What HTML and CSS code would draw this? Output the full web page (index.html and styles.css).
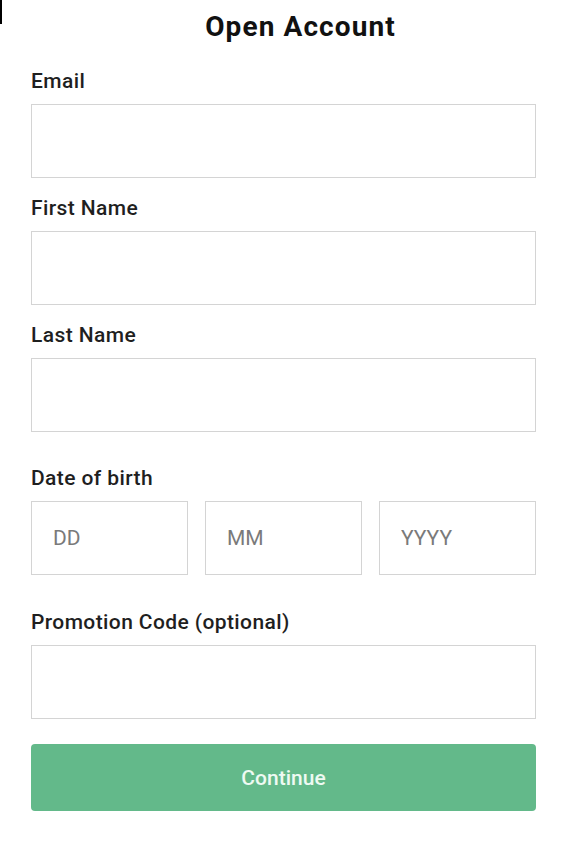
FILE: index.html
```html
<!DOCTYPE html>
<html lang="en">
<head>
<meta charset="utf-8">
<title>Open Account</title>
<link rel="stylesheet" href="styles.css">
</head>
<body>
<span class="cursor"></span>
<main class="page">
  <h1 class="title">Open Account</h1>
  <form class="form">
    <div class="field">
      <label class="label" for="email">Email</label>
      <input class="input" id="email" type="email">
    </div>
    <div class="field">
      <label class="label" for="first">First Name</label>
      <input class="input" id="first" type="text">
    </div>
    <div class="field">
      <label class="label" for="last">Last Name</label>
      <input class="input" id="last" type="text">
    </div>
    <div class="field field-dob">
      <label class="label" for="dd">Date of birth</label>
      <div class="dob">
        <input class="input" id="dd" type="text" placeholder="DD">
        <input class="input" type="text" placeholder="MM">
        <input class="input" type="text" placeholder="YYYY">
      </div>
    </div>
    <div class="field field-promo">
      <label class="label" for="promo">Promotion Code (optional)</label>
      <input class="input" id="promo" type="text">
    </div>
    <button class="button" type="button">Continue</button>
  </form>
</main>
</body>
</html>
```

FILE: styles.css
```css
* { box-sizing: border-box; }
html, body { margin: 0; padding: 0; background: #ffffff; }
body { font-family: Roboto, "Liberation Sans", sans-serif; color: #1c1c1c; }

.cursor {
  position: absolute;
  left: 0;
  top: 0;
  width: 2px;
  height: 24px;
  background: #000;
}

.page {
  padding: 11px 31px 0 31px;
}

.title {
  margin: 0;
  padding-left: 34px;
  text-align: center;
  font-size: 28px;
  line-height: 32px;
  letter-spacing: 1.1px;
  font-weight: 700;
  color: #111;
}

.form {
  display: flex;
  flex-direction: column;
  margin-top: 26px;
}

.field {
  display: flex;
  flex-direction: column;
  margin-bottom: 18px;
}
.field-dob { margin-top: 16px; }
.field-promo { margin-top: 17px; }

.label {
  font-size: 21px;
  line-height: 24px;
  letter-spacing: 0.4px;
  font-weight: 500;
  color: #1f1f1f;
  margin-bottom: 11px;
}

.input {
  display: block;
  width: 100%;
  height: 74px;
  border: 1px solid #d4d4d4;
  border-radius: 0;
  background: #fff;
  padding: 0 21px;
  font-family: Roboto, "Liberation Sans", sans-serif;
  font-size: 21px;
  color: #333;
  outline: none;
}
.input::placeholder { color: #7a7a7a; }

.dob {
  display: grid;
  grid-template-columns: 1fr 1fr 1fr;
  gap: 17px;
}

.button {
  margin-top: 7px;
  height: 67px;
  width: 100%;
  border: none;
  border-radius: 4px;
  background: #63b98a;
  color: #eefaf2;
  font-family: Roboto, "Liberation Sans", sans-serif;
  font-size: 21px;
  font-weight: 500;
}
```
